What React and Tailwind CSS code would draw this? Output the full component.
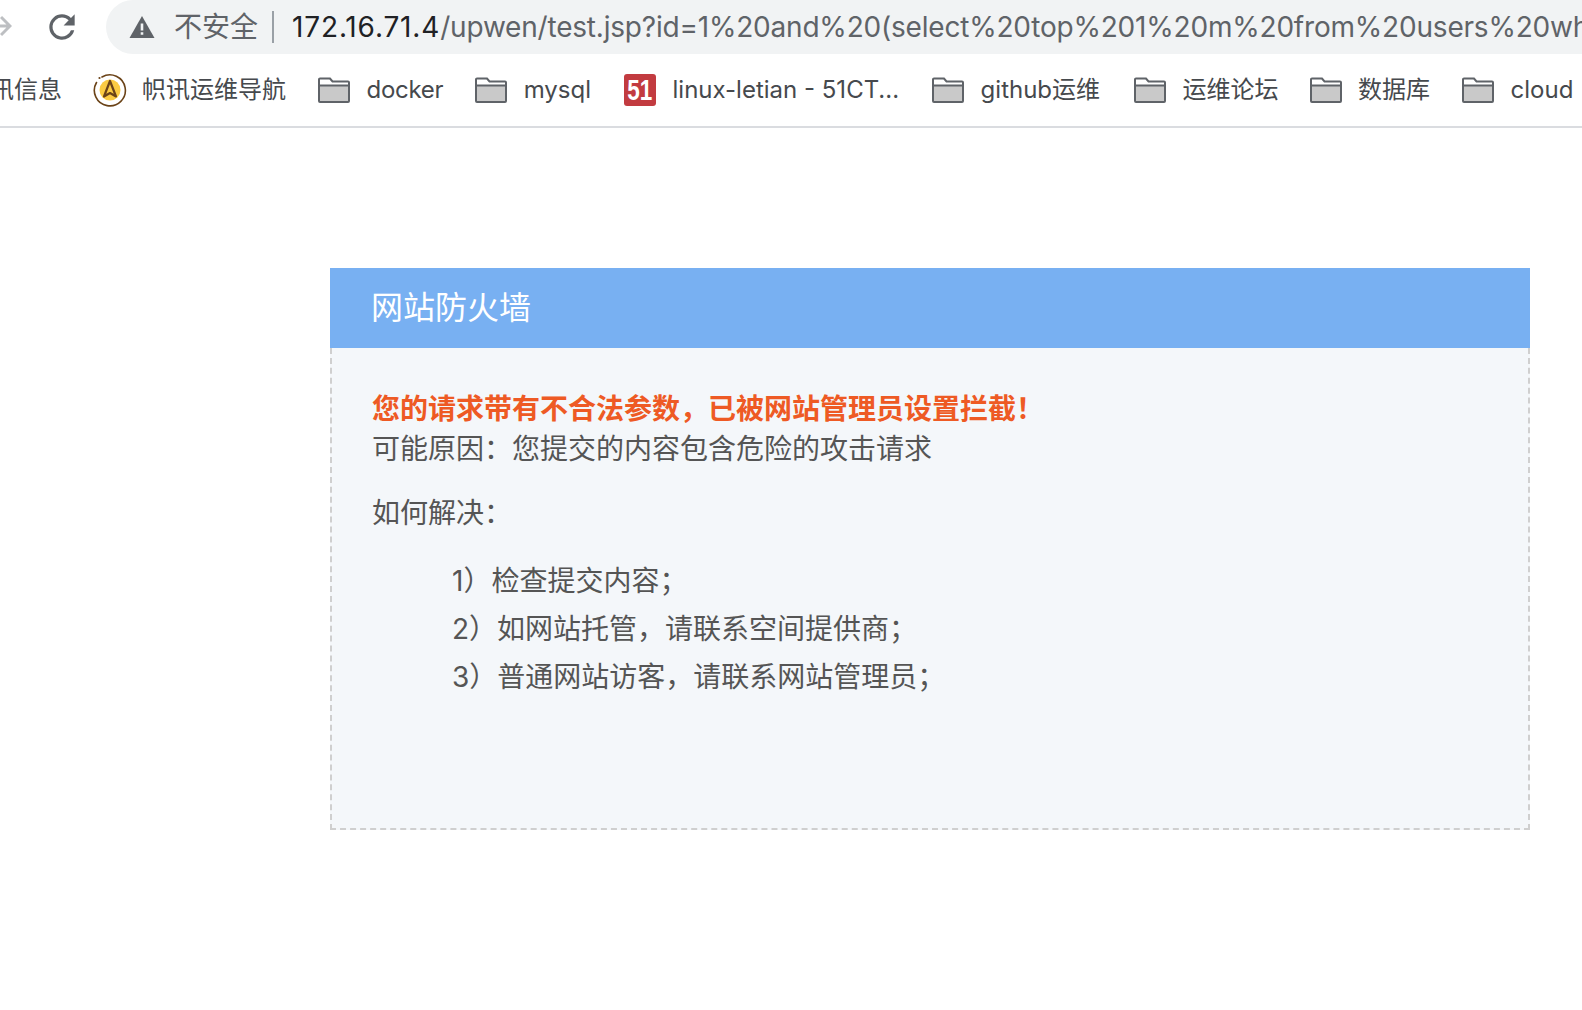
import React from 'react';

const FONT = "font-['Inter','Noto_Sans_CJK_SC',sans-serif]";

const FolderIcon = () => (
    <svg width="32" height="26" viewBox="0 0 32 26" className="shrink-0">
        <path d="M1 24V2.500a1 1 0 0 1 1-1h10l2.500 3H30a1 1 0 0 1 1 1V24a1 1 0 0 1-1 1H2a1 1 0 0 1-1-1z" fill="#fff" stroke="#5f6368" strokeWidth="2" />
        <path d="M2 9h28v15H2z" fill="#c9c9c9" />
        <path d="M1 8.500h30" stroke="#5f6368" strokeWidth="2" />
    </svg>
);

const NavLogo = () => (
    <svg width="34" height="34" viewBox="0 0 34 34" className="shrink-0">
        <circle cx="17" cy="17" r="10.500" fill="#fbcb43" />
        <path d="M9 4A15.500 15.500 0 1 1 3.500 9.500" fill="none" stroke="#6b4318" strokeWidth="1.600" strokeLinecap="round" />
        <circle cx="6.500" cy="5" r="1.100" fill="#6b4318" />
        <path d="M17 8l6 15.500-6-3.500-6 3.500z" fill="none" stroke="#6b4318" strokeWidth="2.200" strokeLinejoin="round" />
    </svg>
);

const Logo51 = () => (
    <div className="w-8 h-8 shrink-0 rounded-[3px] bg-[#c23b40] flex items-center justify-center">
        <span className="text-white font-['Liberation_Sans',sans-serif] font-bold text-[30px] leading-none scale-x-[0.75]">51</span>
    </div>
);

const Bookmark = ({ icon, label, className = 'gap-[16.5px]' }) => (
    <div className={`flex items-center shrink-0 ${className}`}>
        {icon}
        <span className="text-[24px] leading-none text-[#46494d] whitespace-nowrap">{label}</span>
    </div>
);

const App = () => {
    return (
        <div className={`w-[1582px] h-[1010px] bg-white overflow-hidden ${FONT}`}>
            {/* barra de direccion */}
            <div className="h-[54px] flex items-center overflow-hidden">
                <svg width="12" height="28" viewBox="0 0 12 28" className="shrink-0 mb-[2px]">
                    <path d="M-3 14h13M1 5l9 9-9 9" fill="none" stroke="#bdbfc2" strokeWidth="3" />
                </svg>
                <svg width="38" height="38" viewBox="0 0 24 24" className="shrink-0 ml-[31px] mb-[1px]">
                    <path d="M17.650 6.350A7.960 7.960 0 0 0 12 4a8 8 0 1 0 7.730 10h-2.080A6 6 0 1 1 12 6c1.660 0 3.140.69 4.220 1.780L13 11h7V4l-2.350 2.350z" fill="#5f6368" />
                </svg>
                <div className="ml-[25px] flex-1 min-w-0 h-[54px] rounded-l-[27px] bg-[#f1f3f4] flex items-center overflow-hidden pl-[23px]">
                    <svg width="26" height="24" viewBox="0 0 26 24" className="shrink-0">
                        <path d="M13 1l12.500 22H.5z" fill="#5f6368" />
                        <path d="M11.700 8.500h2.600v7h-2.600zM11.700 17.200h2.600v2.600h-2.600z" fill="#f1f3f4" />
                    </svg>
                    <span className="ml-[19px] text-[28px] leading-none text-[#5f6368] shrink-0">不安全</span>
                    <span className="ml-[14px] w-[2px] h-[32px] bg-[#9aa0a6] shrink-0" />
                    <span className="ml-[18px] text-[28px] leading-none text-[#5f6368] whitespace-nowrap tracking-[-0.2px]">
                        <span className="text-[#202124] tracking-[0.85px]">172.16.71.4</span>/upwen/test.jsp?id=1%20and%20(select%20top%201%20m%20from%20users%20where
                    </span>
                </div>
            </div>

            {/* marcadores */}
            <div className="h-[74px] border-b-2 border-[#dadce0] flex items-center gap-[32px] overflow-hidden">
                <span className="-ml-[10px] -mr-px text-[24px] leading-none text-[#46494d] whitespace-nowrap shrink-0">讯信息</span>
                <Bookmark icon={<NavLogo />} label="帜讯运维导航" className="gap-[15px]" />
                <Bookmark icon={<FolderIcon />} label="docker" className="gap-[16.5px] tracking-[-0.3px]" />
                <Bookmark icon={<FolderIcon />} label="mysql" />
                <Bookmark icon={<Logo51 />} label="linux-letian - 51CT..." className="gap-[16.5px] ml-px" />
                <Bookmark icon={<FolderIcon />} label="github运维" className="gap-[16.5px] ml-px" />
                <Bookmark icon={<FolderIcon />} label="运维论坛" className="gap-[16.5px] ml-[2px]" />
                <Bookmark icon={<FolderIcon />} label="数据库" className="gap-[16.5px] -ml-px" />
                <Bookmark icon={<FolderIcon />} label="cloud" />
            </div>

            {/* panel */}
            <div className="ml-[330px] mt-[140px] w-[1200px]">
                <div className="h-[80px] bg-[#78b0f2] flex items-center pl-[41px]">
                    <h1 className="text-[32px] leading-none font-normal text-white">网站防火墙</h1>
                </div>
                <div className="h-[482px] bg-[#f4f7fa] border-2 border-t-0 border-dashed border-[#cfcfcf] pl-[40px] pt-[41px] text-[28px] text-[#555]">
                    <p className="leading-[40px] font-bold text-[#ee5a24]">您的请求带有不合法参数，已被网站管理员设置拦截！</p>
                    <p className="leading-[40px]">可能原因：您提交的内容包含危险的攻击请求</p>
                    <p className="mt-[24px] leading-[40px]">如何解决：</p>
                    <ul className="mt-[24px] pl-[80px]">
                        <li className="leading-[48px]">1）检查提交内容；</li>
                        <li className="leading-[48px]">2）如网站托管，请联系空间提供商；</li>
                        <li className="leading-[48px]">3）普通网站访客，请联系网站管理员；</li>
                    </ul>
                </div>
            </div>
        </div>
    );
};

export default App;
